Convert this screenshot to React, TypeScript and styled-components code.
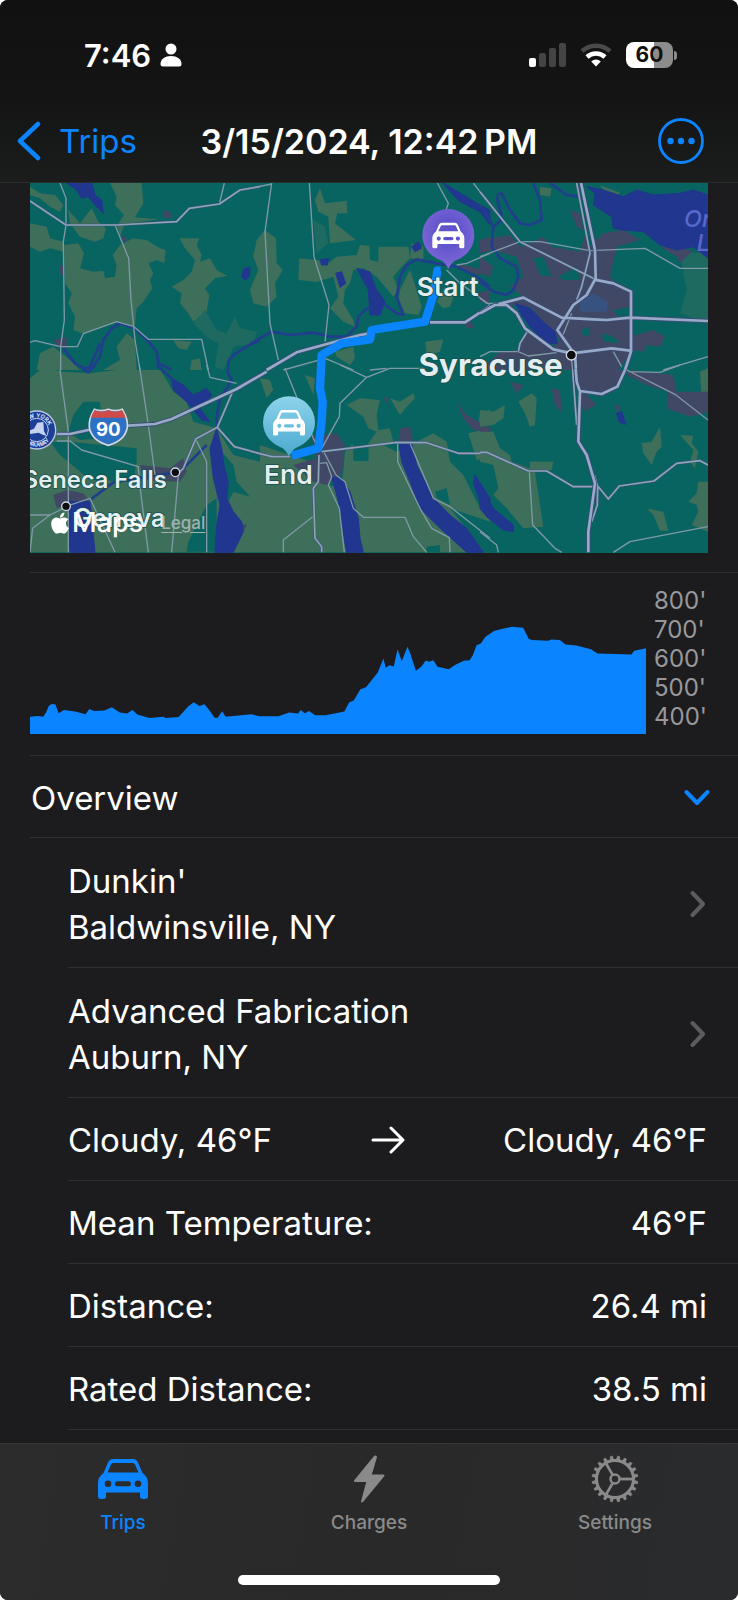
import React, { useState } from 'react'
import styled, { createGlobalStyle } from 'styled-components'
import { FaApple } from 'react-icons/fa'

const BLUE = '#0a84ff'
const LINE = '#303032'

const GlobalStyle = createGlobalStyle`
  * {
    box-sizing: border-box;
  }
  body {
    margin: 0;
    background: #fff;
    font-family: Inter, 'Liberation Sans', sans-serif;
    -webkit-font-smoothing: antialiased;
  }
  button {
    font: inherit;
    color: inherit;
    background: none;
    border: 0;
    padding: 0;
    text-align: left;
    cursor: pointer;
  }
  svg {
    display: block;
  }
`
const Screen = styled('div')`
  display: flex;
  flex-direction: column;
  min-height: 100vh;
  overflow: hidden;
  border-radius: 8px;
  background: #1c1c1e;
  color: #fff;
  font-size: 33px;
`
const Header = styled('header')`
  background: linear-gradient(#111, #141414 55%, #1b1d1d);
  border-bottom: 1px solid #2b2c2d;
`
const StatusBar = styled('div')`
  display: flex;
  justify-content: space-between;
  align-items: center;
  height: 110px;
  padding: 0 61px 0 84px;
`
const StatusGroup = styled('div')<{ $gap: number }>`
  display: flex;
  align-items: center;
  gap: ${({ $gap }) => $gap}px;
`
const Clock = styled('span')`
  font-size: 31px;
  font-weight: 600;
`
const Battery = styled('div')`
  width: 47px;
  height: 26px;
  border-radius: 8px;
  background: linear-gradient(90deg, #fff 60%, #8c8c8c 60%);
  color: #111;
  font-size: 21px;
  font-weight: 700;
  line-height: 26px;
  text-align: center;
`
const BatteryBox = styled('div')`
  display: flex;
  align-items: center;
  gap: 1px;
`
const BatteryNub = styled('div')`
  width: 3px;
  height: 9px;
  border-radius: 0 4px 4px 0;
  background: #8c8c8c;
`
const NavBar = styled('nav')`
  display: grid;
  grid-template-columns: 1fr auto 1fr;
  align-items: center;
  height: 72px;
  padding-bottom: 10px;
`
const BackButton = styled('button')`
  display: flex;
  align-items: center;
  gap: 18px;
  padding-left: 17px;
  color: ${BLUE};
`
const Title = styled('h1')`
  margin: 0;
  font-size: 34px;
  font-weight: 600;
  white-space: nowrap;
`
const MoreButton = styled('button')`
  justify-self: end;
  margin-right: 34px;
`
const MapBox = styled('section')`
  position: relative;
  margin: 0 30px 19px;
  overflow: hidden;
`
const MapSvg = styled('svg')`
  width: 100%;
  height: auto;
`
const Attribution = styled('div')`
  position: absolute;
  left: 18px;
  bottom: 14px;
  display: flex;
  align-items: center;
  color: #fff;
  font-size: 27px;
  font-weight: 500;
  line-height: 32px;
`
const LegalLink = styled('a')`
  margin-left: 18px;
  color: #a0b2ae;
  font-size: 17px;
  text-underline-offset: 3px;
`
const ChartBox = styled('section')`
  display: flex;
  gap: 8px;
  height: 183px;
  margin-left: 30px;
  padding: 13px 32px 0 0;
  border-top: 1px solid ${LINE};
`
const ChartSvg = styled('svg')`
  flex: 1;
  min-width: 0;
  height: 145px;
  margin-top: 3px;
`
const Scale = styled('ol')`
  width: 52px;
  margin: 0;
  padding: 0;
  list-style: none;
  color: #98989c;
  font-size: 24px;
  line-height: 29px;
`
const SectionButton = styled('button')`
  display: flex;
  justify-content: space-between;
  align-items: center;
  height: 82px;
  margin-left: 30px;
  padding: 2px 28px 0 1px;
  border-top: 1px solid ${LINE};
`
const Rows = styled('div')`
  margin-left: 30px;
  border-top: 1px solid ${LINE};
`
const Row = styled('div')<{ $tall?: boolean }>`
  display: flex;
  justify-content: space-between;
  align-items: center;
  width: calc(100% - 38px);
  height: ${({ $tall }) => ($tall ? 130 : 83)}px;
  margin-left: 38px;
  padding-top: 2px;
  padding-right: ${({ $tall }) => ($tall ? 32 : 31)}px;
  border-bottom: 1px solid ${LINE};
  line-height: 46px;
`
const TabBar = styled('nav')`
  margin-top: auto;
  padding-top: 11px;
  border-top: 1px solid #363636;
  background: linear-gradient(100deg, #2c2c2c, #292929 50%, #2a2b2d);
`
const Tabs = styled('div')`
  display: grid;
  grid-template-columns: repeat(3, 1fr);
`
const Tab = styled('button')<{ $active?: boolean }>`
  display: flex;
  flex-direction: column;
  align-items: center;
  gap: 8px;
  color: ${({ $active }) => ($active ? BLUE : '#8a8a8a')};
  font-size: 19px;
  font-weight: 500;
  line-height: 24px;
`
const TabIcon = styled('span')`
  display: grid;
  place-items: center;
  height: 48px;
`
const HomeIndicator = styled('div')`
  width: 262px;
  height: 10px;
  margin: 40px auto 15px;
  border-radius: 5px;
  background: #fff;
`

const CAR =
  'M10 3.5Q11.5 0 15 0H35Q38.500 0 40 3.500L44.500 14Q50 18 50 24V37.500Q50 40 47 40H45Q42 40 42 37.500V33.500H8V37.500Q8 40 5 40H3Q0 40 0 37.500V24Q0 18 5.500 14Z' +
  'M13 5.500Q13.600 4 15.200 4H34.800Q36.400 4 37 5.500L40.500 13.500H9.500Z' +
  'M10 21.500A3.300 3.300 0 1 0 10 28.100A3.300 3.300 0 1 0 10 21.500Z' +
  'M40 21.500A3.300 3.300 0 1 0 40 28.100A3.300 3.300 0 1 0 40 21.500Z' +
  'M19.500 22.300H30.500A2.500 2.500 0 0 1 30.500 27.300H19.500A2.500 2.500 0 0 1 19.500 22.300Z'

const TEETH = Array.from({ length: 20 }, (_, i) => i * 18)

// terrain is grouped in six sheets, each with its own origin
const SHEETS = [
  {
    x: -30,
    y: -9,
    green:
      'M270 9H365L370 70L345 112L415 118L345 128L310 140L300 170L292 135L312 105L285 75L290 50Z M30 20L60 40L105 45L130 75L120 95L90 80L60 55L30 45Z M30 130L80 140L90 175L130 185V215L90 205L60 215L30 200Z M145 90L180 130L215 85L235 125L258 145L250 175L225 185L180 170L150 130Z M132 195L175 190L192 220L180 265L220 275L250 272L255 295L285 290L290 255L278 225L300 195L340 175L380 180L420 205L437 210L433 250L410 240L385 250L400 280L390 300L397 325L370 365L350 385L345 440L290 425L190 461L160 450L165 410L145 370L155 340L135 310Z M478 175L538 175L530 195L545 225L540 245L570 235L590 270L622 287L585 295L555 325L568 345L560 395L520 425L505 400L480 370L485 340L455 320L490 300L515 275L525 240L495 205Z M720 185L705 205L720 230Z M60 520L100 500L150 540L180 570H50Z M290 500L320 460L345 480L350 570H250L300 540Z M460 480L515 485L500 510L475 505Z M515 540L540 535L545 570H510Z',
    pale: 'M520 430L555 390L590 450L620 460L645 410L660 445L710 455L700 490L640 500L610 570L585 560L595 490L560 470Z',
    urban: 'M430 90L450 95L455 115L432 112Z M100 480L140 470V505L110 500Z M305 165L325 180L310 188Z M120 255L132 260V290L120 280Z',
    water: 'M140 9H215L225 45L245 60L250 100L230 80L205 50L185 55L170 30Z M664 290L672 265L690 262L688 290L675 300Z',
    river: 'M130 505L165 550L195 565L220 560L240 530L250 480L275 445L300 430L345 445L385 485L410 515L415 550L455 570 M210 560L240 490 M720 480L680 500L640 525L625 545V570',
    major: '',
    mid: 'M30 63L138 135H290L470 125L508 85L598 72L660 30L720 20',
    minor: 'M120 9L138 55V135L130 185L133 420L122 500V570 M285 135L326 235L333 360L345 480L360 570 M613 9L598 72 M30 487L45 482L122 500H172L190 461L290 425L342 440L385 478H545L565 570',
  },
  {
    x: 660,
    y: -9,
    green:
      'M45 150L78 175L80 250L98 270L75 310L80 350L50 380L10 370L0 330L25 270L10 230L20 180Z M210 25L225 70L290 62L292 100L262 100L255 130L318 180L240 190L235 110L205 95L195 60Z M148 235L200 240L235 250L260 230L320 225L330 195L358 197L360 240L385 245V200H475L480 235L455 260L430 290L445 330L430 350L380 290L340 265L310 270L300 310L285 330L280 370L310 420L315 440L280 425L240 385L265 350L250 290L200 305L145 300Z M480 270L500 330L515 380L505 405L465 400L445 360L450 330Z M560 365L585 320L610 350L600 380L580 385Z M255 515L310 500L315 535L300 555L260 530Z M525 485L580 478L570 515L530 525Z M485 190L520 200V240L480 235Z',
    pale: 'M190 120L225 140L235 190L200 220Z',
    urban: 'M690 180L720 170V220L695 210Z M620 250L700 270L690 285L640 270Z M645 425L670 430L668 445H650Z M680 340L720 330V370L690 365Z',
    water: 'M320 265L360 275L375 320L405 365L390 405L360 405L355 330Z M257 280L275 275L287 310L270 322Z M210 240L235 235L232 255H215Z M485 200L505 185L515 205L495 215Z M580 9L640 45L690 75L720 90V135L690 95L630 65L600 35Z',
    river: 'M0 492L65 455L120 465L190 458L240 470L290 470L320 440L325 410L350 385L370 385 M400 370L440 400L460 405L440 350L450 290L470 255L500 238L560 250L620 260L680 290L720 320',
    major: 'M50 570L140 517L330 465L360 460 M540 427H645L720 378',
    mid: '',
    minor: 'M65 9L45 155L60 430L85 540 M0 25L65 12 M178 9L192 230L237 375L225 485 M562 9L595 70L585 100 M670 9L720 75 M590 270L630 310L720 375 M620 255L650 250L720 220 M100 570L225 535L310 570 M360 570L410 565',
  },
  {
    x: 1350,
    y: -9,
    green: 'M360 15L420 38L410 50L380 45Z M180 20L215 25L210 50L180 45Z',
    pale: 'M600 220L684 215V430L600 400L620 330Z',
    urban:
      'M90 165L120 200L160 185L190 170L215 200L300 215L315 165L330 200L370 160L430 150L480 180L410 200L390 290L420 320L453 335V380L400 390L420 420H453V515L415 570H0L60 515L115 510L140 450L190 480L220 500L240 480L150 380L70 375L130 350L90 320L130 290L110 230L40 210L0 220V180Z M270 90L300 100L310 150L290 140Z M450 470L520 450L555 470L540 500L500 495L490 515L455 510Z M540 200L640 210L600 250L590 230Z M0 230L40 260L30 290L0 280Z',
    teal: 'M160 235L190 230L215 290L180 285Z M235 290L290 260L300 300L250 300Z M305 450L325 440L330 465L310 470Z M365 460L400 470L420 490L370 485Z',
    water:
      'M320 20L370 30L430 50L470 30L520 45L600 40L640 30L684 45V235L640 200L590 210L540 195L490 155L430 150L400 145L395 110L340 75L345 40Z M105 370L150 385L190 425L225 455L232 490L200 490L150 440L125 405Z',
    river: 'M50 45L65 40L90 90L120 130L150 135L185 120L180 60L160 9 M65 110L50 50 M0 75L40 140L70 115 M40 140L35 200L60 235L110 260L115 290L100 330L80 345L40 335L0 305 M210 9L260 45L300 50',
    major: 'M303 9L345 210L347 295L320 345L280 375L232 450L275 510 M340 298L400 310L453 335V515L435 570 M0 400L45 375H80L110 400L135 445L220 508L275 520L395 505L450 512 M55 372L130 353L245 413L340 418L380 420L450 413L684 423 M285 520L288 570',
    mid: 'M0 35L120 185L350 300 M290 9L330 220L305 320L290 360 M145 450L120 490L115 515',
    minor: 'M0 230L120 185L180 185L330 212L495 205L600 265H684 M0 530L30 515H115L145 528L230 518 M0 355L20 370H50 M400 515L425 560 M550 570L684 530 M245 475L275 400 M272 520L278 570',
  },
  {
    x: -30,
    y: 546,
    green: 'M30 15H720V562H30Z',
    pale: '',
    teal: 'M30 15H60L30 40Z M100 15H290L210 25L130 20Z M160 150L190 110L240 110L250 220L180 225L145 200Z M90 230H150L350 250V290L340 350L210 345L120 270Z M420 15H720V290L640 270L590 190L520 170L500 110L460 80L430 30Z M605 260L640 300L650 350L690 395L640 380L620 420Z M505 530L560 420L590 400V560H500Z',
    urban: 'M100 390L140 375L190 385L210 410L140 420L110 430Z M360 300L450 310L490 280L500 320L480 350L370 345Z M640 470L680 480L660 520Z',
    water: 'M455 40L490 60L520 90L560 70L575 90L540 130L570 170L545 165L500 110L460 75Z M570 250L590 190L605 250L612 300L625 350L620 400L640 440L665 470L670 500L640 562H585L590 480L600 420L580 340Z M150 410H210L225 562H150L145 480Z',
    river: 'M185 10L205 22L225 0 M410 0L460 45 M620 15L635 45L620 70L600 100L590 160L592 190 M210 405L280 352L350 340L450 325 M490 310L560 240',
    major: 'M110 207H150L205 195L325 182L405 177L455 162L650 72L740 20',
    mid: 'M640 75L592 187L527 222L490 310L470 330 M592 187L643 245L720 265',
    minor: 'M120 15L145 200V562 M358 0L385 180L405 330 M560 0L570 37L650 55 M527 222L560 290V562 M110 228H150L185 255L355 305L358 350L385 562 M138 424L210 400L245 475L285 562 M30 450H90L140 425 M30 562L38 490L90 450 M475 330L455 562',
  },
  {
    x: 660,
    y: 546,
    green:
      'M30 240L210 300L230 360L275 370L285 260L310 235V285H355V235L380 200L355 190L340 155L290 120L330 100L390 105L380 150L385 195L420 190L430 230L400 240L440 260L500 230L550 205L590 230L600 290L640 330L690 430L720 460V562H30Z M420 100L450 110L490 85L495 100L470 125L450 150Z M30 40L60 45L70 75L50 98Z M165 30L195 40L190 90Z M690 140L720 135V180L685 180Z M655 205L720 190V280L680 285Z',
    pale: '',
    teal: 'M310 235L355 240V288H312Z M555 380L590 370L600 420L560 400Z M600 430L720 470V562H700L640 480Z M530 545L570 540V562H530Z',
    urban: 'M185 215L260 205L285 240L275 330L230 360L190 350L130 300L200 280Z M450 190L480 185L490 230H445Z M620 110L650 150L720 190V200L670 195L640 160Z M400 95L415 100L412 120Z',
    water: 'M245 335L275 340L300 380L325 460L330 520L340 562H290L275 480L265 410Z M447 235H485L500 300L550 400L600 450L650 490L700 562H650L560 480L510 430L480 350L455 290Z M675 330L720 400V450L690 410L670 355Z',
    river: '',
    major: '',
    mid: 'M215 260L440 232L530 233L625 265H695 M0 258L65 275H120 M207 270L205 350L190 370L195 520L215 545V562',
    minor: 'M105 10L190 220L210 260 M215 250L268 155L270 115L350 37L420 10H520 M270 0L350 37 M210 295L230 293L245 335L235 360L268 430L283 562 M222 262L258 330L285 350L310 430L340 457H465L490 515L530 562 M188 455L100 525V562 M443 235V290L510 430L545 490L598 518L600 562 M480 235L550 400L600 425L720 520',
  },
  {
    x: 1350,
    y: 546,
    green:
      'M0 200H40L60 250L90 270L95 290L150 310V290L220 290L215 315L165 320L180 420L190 485L130 490L80 430L40 390L55 370L40 300L0 290Z M115 110L155 85L170 100L165 180L150 185L135 145Z M0 135L40 140L75 120L70 160L40 180L0 185Z M540 185L545 245L530 260L515 300L490 265L485 235L515 230Z M600 210L640 212L635 235L655 260L645 310L630 290L640 255Z M660 20L684 10V115L665 110Z M684 350L655 350L650 385L625 410L650 420L655 440L635 480L684 500Z M500 430L550 440L565 497H540L520 450Z',
    pale: '',
    urban: 'M280 15H440L410 65L360 85L310 80L350 120L310 140L295 70Z M450 15L580 30L590 80L684 80V140L630 155L560 130L565 80L500 60L440 30Z M215 70L240 75L245 145L225 120Z M0 185L35 190L30 200H0Z M90 50L130 60L110 85Z M402 120L420 120L415 145Z',
    water: 'M0 360L40 430L100 480V500L70 495L20 455L0 430Z M410 145L425 140L438 178L418 172Z',
    river: '',
    major: 'M287 10L290 50L300 80L295 230L320 270L345 355L325 500V562 M300 78L365 87L412 65L435 15',
    mid: 'M278 15L290 180 M343 330L353 365L352 420L335 470 M0 262H20L145 318H200L280 365H345 M355 365L385 402L418 363L522 348L590 295L660 287L684 300',
    minor: 'M148 320L158 480L225 550L245 562 M440 15L585 88L684 165 M445 20L540 22L600 0 M400 562L450 530L684 485 M0 500L50 540L55 562',
  },
]

const ELEVATION =
  '64,472 80,470 92,472 98,460 104,440 110,434 118,436 125,462 136,452 160,457 182,465 190,449 200,455 222,454 238,444 255,460 270,463 282,452 292,466 318,476 348,472 352,476 380,473 400,442 412,429 424,440 435,435 448,458 456,475 463,475 472,456 480,472 535,465 552,471 592,471 615,460 634,463 639,452 648,462 657,455 670,468 692,468 732,457 742,430 752,424 766,390 778,384 803,340 815,298 820,326 828,318 837,322 845,270 854,306 866,263 872,282 884,335 896,322 905,304 912,308 921,303 930,323 954,330 968,317 986,305 998,303 1005,288 1013,258 1022,253 1032,233 1050,216 1066,210 1088,203 1112,206 1124,240 1132,243 1165,245 1172,241 1190,243 1202,256 1225,259 1256,270 1270,283 1342,286 1348,275 1373,267'

const FEET = ["800'", "700'", "600'", "500'", "400'"]

const PLACES = [
  ["Dunkin'", 'Baldwinsville, NY'],
  ['Advanced Fabrication', 'Auburn, NY'],
]

const STATS = [
  ['Mean Temperature:', '46°F'],
  ['Distance:', '26.4 mi'],
  ['Rated Distance:', '38.5 mi'],
]

const CarIcon = () => (
  <svg width="50" height="40" viewBox="0 0 50 40" aria-hidden="true">
    <path d={CAR} fill="currentColor" fillRule="evenodd" />
  </svg>
)

const BoltIcon = () => (
  <svg width="32" height="48" viewBox="0 0 32 48" aria-hidden="true">
    <path
      d="M22 1.500L2 26H14.500L9 46.500L30.500 20.500H17.500L23 2Z"
      fill="currentColor"
      stroke="currentColor"
      strokeWidth="2"
      strokeLinejoin="round"
    />
  </svg>
)

const GearIcon = () => (
  <svg width="48" height="48" viewBox="-24 -24 48 48" fill="none" stroke="currentColor" aria-hidden="true">
    <circle r="18.500" strokeWidth="3" />
    <circle r="4.500" strokeWidth="2.500" />
    {TEETH.map((deg) => (
      <path key={deg} d="M19 -1.800L23 -1V1L19 1.800Z" fill="currentColor" strokeWidth="0.600" transform={`rotate(${deg + 9})`} />
    ))}
    {[0, 120, 240].map((deg) => (
      <path key={deg} d="M5 0H18" strokeWidth="2.800" transform={`rotate(${deg})`} />
    ))}
  </svg>
)

const Chevron = () => (
  <svg width="16" height="28" viewBox="0 0 16 28" fill="none" aria-hidden="true">
    <path d="M2.500 3L13 14L2.500 25" stroke="#5c5c60" strokeWidth="4" strokeLinecap="round" strokeLinejoin="round" />
  </svg>
)

const Pin = ({ x, y, fill }) => (
  <g transform={`translate(${x} ${y})`}>
    <path d="M-78 0A78 78 0 1 1 78 0C78 40 50 66 22 76Q10 82 0 102Q-10 82 -22 76C-50 66 -78 40 -78 0Z" fill={fill} />
    <path d={CAR} fill="#fff" fillRule="evenodd" transform="translate(-48 -37) scale(1.920)" />
  </g>
)

const TripMap = () => (
  <MapBox>
    <MapSvg viewBox="0 0 2034 1110" fontFamily="Inter, sans-serif" role="img" aria-label="Trip route">
      <defs>
        <radialGradient id="startPin" cy="0.400" r="0.600">
          <stop offset="0.300" stopColor="#5e53cb" />
          <stop offset="1" stopColor="#8069d8" />
        </radialGradient>
        <linearGradient id="endPin" x2="0" y2="1">
          <stop offset="0" stopColor="#8dd3ea" />
          <stop offset="1" stopColor="#4aa9d0" />
        </linearGradient>
      </defs>
      <rect width="2034" height="1110" fill="#086461" />
      {SHEETS.map((s, idx) => (
        <g key={`land-${idx}`} transform={`translate(${s.x} ${s.y})`}>
          <path d={s.green} fill="#3d6f5b" />
          <path d={s.pale} fill="#1f6a60" />
          <path d={s.urban} fill="#404865" />
          <path d={s.teal || ''} fill="#086461" />
          <path d={s.water} fill="#21368f" stroke="#21368f" strokeWidth="3" />
          <path d={s.river} fill="none" stroke="#213e8c" strokeWidth="8" strokeLinejoin="round" />
        </g>
      ))}
      <path d="M1650 351L1690 331L1735 356L1730 386H1650Z" fill="#38527f" />
      {SHEETS.map((s, idx) => (
        <g key={`road-${idx}`} transform={`translate(${s.x} ${s.y})`} fill="none" strokeLinejoin="round">
          <path d={s.minor} stroke="#8099a6" strokeWidth="4" />
          <path d={s.mid} stroke="#3a5578" strokeWidth="8" />
          <path d={s.mid} stroke="#8fa2b8" strokeWidth="5" />
          <path d={s.major} stroke="#3b4b78" strokeWidth="13" />
          <path d={s.major} stroke="#98abc6" strokeWidth="8" />
        </g>
      ))}

      <g fill="#5868cb" fontSize="70" fontStyle="italic" fontWeight="500">
        <text x="1962" y="133">On</text>
        <text x="2000" y="203">L</text>
      </g>

      <g transform="translate(20 741)">
        <circle r="59" fill="#bcc9e6" />
        <circle r="55" fill="#1c3f98" />
        <circle r="35" fill="none" stroke="#c6d2ee" strokeWidth="3" />
        <path d="M-24 2L-8 -4L2 -22L20 -24L22 4L30 18L18 14L6 8L-22 12Z" fill="#c6d2ee" />
        <path id="badgeTop" d="M-38 0A38 38 0 0 1 38 0" fill="none" />
        <path id="badgeBottom" d="M-50 0A50 50 0 0 0 50 0" fill="none" />
        <g fill="#dbe4f8" fontSize="17" fontWeight="700" textAnchor="middle">
          <text>
            <textPath href="#badgeTop" startOffset="50%">NEW YORK</textPath>
          </text>
          <text>
            <textPath href="#badgeBottom" startOffset="50%">THRUWAY</textPath>
          </text>
        </g>
      </g>

      <g transform="translate(235 733)">
        <path
          d="M-42 -54Q-20 -46 0 -54Q20 -46 42 -54Q60 -24 57 0Q50 40 0 54Q-50 40 -57 0Q-60 -24 -42 -54Z"
          fill="#2b72c4"
          stroke="#d5d8e2"
          strokeWidth="5"
        />
        <path d="M-41 -51Q-20 -43 0 -51Q20 -43 41 -51Q49 -40 52 -29H-52Q-49 -40 -41 -51Z" fill="#d04a48" />
        <text y="25" fill="#fff" fontSize="56" fontWeight="700" textAnchor="middle">90</text>
      </g>

      <path
        d="M1232 263H1222L1212 331L1185 416L1025 441L1020 469L935 481L875 516L870 616L878 656L875 716L865 796L785 818"
        fill="none"
        stroke={BLUE}
        strokeWidth="25"
        strokeLinejoin="round"
      />
      <Pin x={1255} y={156} fill="url(#startPin)" />
      <Pin x={777} y={718} fill="url(#endPin)" />

      <g fill="#0b0d12" stroke="#cfd8e0" strokeWidth="4">
        <circle cx="436" cy="868" r="13" />
        <circle cx="108" cy="970" r="13" />
        <circle cx="1624" cy="516" r="15" />
      </g>
      <g fill="#e4eef0" stroke="#17504f" strokeWidth="5" strokeLinejoin="round" paintOrder="stroke" fontWeight="600">
        <text x="1253" y="340" fontSize="79" textAnchor="middle">Start</text>
        <text x="775" y="904" fontSize="79" textAnchor="middle">End</text>
        <text x="1598" y="579" fontSize="94" fontWeight="700" textAnchor="end">Syracuse</text>
        <text x="410" y="914" fontSize="71" textAnchor="end">Seneca Falls</text>
        <text x="130" y="1031" fontSize="75">Geneva</text>
      </g>
    </MapSvg>
    <Attribution>
      <FaApple size={24} />
      <span>Maps</span>
      <LegalLink href="#legal">Legal</LegalLink>
    </Attribution>
  </MapBox>
)

const App = () => {
  const [open, setOpen] = useState(true)
  const [tab, setTab] = useState('Trips')

  const tabs = [
    { name: 'Trips', icon: <CarIcon /> },
    { name: 'Charges', icon: <BoltIcon /> },
    { name: 'Settings', icon: <GearIcon /> },
  ]

  return (
    <>
      <GlobalStyle />
      <Screen>
        <Header>
          <StatusBar>
            <StatusGroup $gap={9}>
              <Clock>7:46</Clock>
              <svg width="22" height="24" viewBox="0 0 22 24" fill="#fff" aria-hidden="true">
                <circle cx="11" cy="6" r="5.500" />
                <path d="M0.500 21C0.500 16 5 13 11 13S21.500 16 21.500 21Q21.500 23.500 19 23.500H3Q0.500 23.500 0.500 21Z" />
              </svg>
            </StatusGroup>
            <StatusGroup $gap={14}>
              <svg width="37" height="24" viewBox="0 0 37 24" fill="#444" aria-hidden="true">
                <rect y="15" width="7" height="9" rx="2" fill="#fff" />
                <rect x="10" y="10" width="7" height="14" rx="2" />
                <rect x="20" y="5" width="7" height="19" rx="2" />
                <rect x="30" width="7" height="24" rx="2" />
              </svg>
              <svg width="32" height="24" viewBox="0 0 32 24" fill="none" strokeWidth="4.500" aria-hidden="true">
                <path d="M2 8.200A20.500 20.500 0 0 1 30 8.200" stroke="#4a4a4a" />
                <path d="M7 14A13.500 13.500 0 0 1 25 14" stroke="#fff" />
                <path d="M11.200 18.400A7 7 0 0 1 20.800 18.400L16 23.500Z" fill="#fff" />
              </svg>
              <BatteryBox>
                <Battery>60</Battery>
                <BatteryNub />
              </BatteryBox>
            </StatusGroup>
          </StatusBar>
          <NavBar>
            <BackButton>
              <svg width="24" height="40" viewBox="0 0 24 40" fill="none" aria-hidden="true">
                <path d="M21 3L3 20L21 37" stroke="currentColor" strokeWidth="4.500" strokeLinecap="round" strokeLinejoin="round" />
              </svg>
              Trips
            </BackButton>
            <Title>3/15/2024, 12:42&#8239;PM</Title>
            <MoreButton aria-label="More">
              <svg width="46" height="46" viewBox="0 0 46 46" fill={BLUE} aria-hidden="true">
                <circle cx="23" cy="23" r="21.500" fill="none" stroke={BLUE} strokeWidth="2.800" />
                <circle cx="12.500" cy="23" r="3.200" />
                <circle cx="23" cy="23" r="3.200" />
                <circle cx="33.500" cy="23" r="3.200" />
              </svg>
            </MoreButton>
          </NavBar>
        </Header>

        <TripMap />

        <ChartBox>
          <ChartSvg viewBox="64 90 1309 434" preserveAspectRatio="none" role="img" aria-label="Elevation">
            <polygon points={`${ELEVATION} 1373,524 64,524`} fill={BLUE} />
          </ChartSvg>
          <Scale>
            {FEET.map((ft) => (
              <li key={ft}>{ft}</li>
            ))}
          </Scale>
        </ChartBox>

        <SectionButton aria-expanded={open} onClick={() => setOpen(!open)}>
          Overview
          <svg width="26" height="17" viewBox="0 0 26 17" fill="none" aria-hidden="true">
            <path d="M2.500 3L13 14L23.500 3" stroke={BLUE} strokeWidth="4" strokeLinecap="round" strokeLinejoin="round" />
          </svg>
        </SectionButton>
        {open && (
          <Rows>
            {PLACES.map(([name, town]) => (
              <Row key={name} as="button" $tall>
                <span>
                  {name}
                  <br />
                  {town}
                </span>
                <Chevron />
              </Row>
            ))}
            <Row>
              <span>Cloudy, 46°F</span>
              <svg width="34" height="28" viewBox="0 0 34 28" fill="none" role="img" aria-label="to">
                <path d="M2 14H31M20 2L32 14L20 26" stroke="#fff" strokeWidth="3" strokeLinecap="round" strokeLinejoin="round" />
              </svg>
              <span>Cloudy, 46°F</span>
            </Row>
            {STATS.map(([label, value]) => (
              <Row key={label}>
                <span>{label}</span>
                <span>{value}</span>
              </Row>
            ))}
          </Rows>
        )}

        <TabBar>
          <Tabs>
            {tabs.map(({ name, icon }) => (
              <Tab key={name} $active={tab === name} onClick={() => setTab(name)}>
                <TabIcon>{icon}</TabIcon>
                {name}
              </Tab>
            ))}
          </Tabs>
          <HomeIndicator />
        </TabBar>
      </Screen>
    </>
  )
}

export default App
